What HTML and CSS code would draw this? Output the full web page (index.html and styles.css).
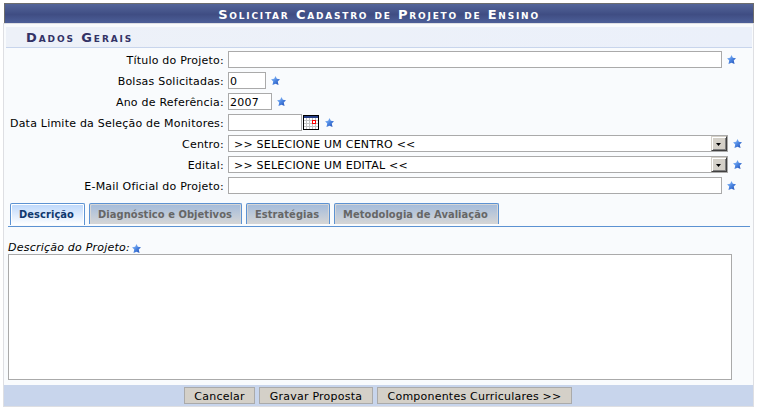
FILE: index.html
```html
<!DOCTYPE html>
<html lang="pt-BR">
<head>
<meta charset="utf-8">
<title>Solicitar Cadastro de Projeto de Ensino</title>
<link rel="stylesheet" href="styles.css">
</head>
<body>
<svg class="defs" width="0" height="0">
  <defs>
    <linearGradient id="g" x1="0" y1="0" x2="1" y2="1"><stop offset="0" stop-color="#a5d0ff"/><stop offset=".5" stop-color="#4c86e2"/><stop offset="1" stop-color="#1d49b0"/></linearGradient>
    <symbol id="star" viewBox="0 0 8 8"><path fill="url(#g)" d="M4 0l1.200 2.500 2.800.3-2 2 .7 3.200L4 6.900 1.300 8 2 4.800 0 2.800l2.800-.3z"/></symbol>
  </defs>
</svg>
<form class="panel">
  <h1 class="title">Solicitar Cadastro de Projeto de Ensino</h1>
  <div class="body">
    <h2 class="section">Dados Gerais</h2>
    <div class="row"><span class="label">Título do Projeto:</span><span class="field wide"></span><svg class="star"><use href="#star"/></svg></div>
    <div class="row"><span class="label">Bolsas Solicitadas:</span><span class="field w38">0</span><svg class="star"><use href="#star"/></svg></div>
    <div class="row"><span class="label">Ano de Referência:</span><span class="field w44">2007</span><svg class="star"><use href="#star"/></svg></div>
    <div class="row"><span class="label">Data Limite da Seleção de Monitores:</span><span class="field w74"></span>
      <svg class="cal" viewBox="0 0 16 15" shape-rendering="crispEdges"><path fill="#000" d="M0 0h16v15H0z"/><path fill="#fff" d="M1 3h14v11H1z"/><path fill="#263f87" d="M1 1h14v2H1z"/><path stroke="#c4c4c4" d="M3.500 3v11M6.500 3v11M9.500 3v11M12.500 3v11M1 5.500h14M1 8.500h14M1 11.500h14"/><path fill="#fff" stroke="#f00" d="M9.500 5.500h3v3h-3z"/></svg>
      <svg class="star"><use href="#star"/></svg></div>
    <div class="row"><span class="label">Centro:</span><span class="field select">&gt;&gt; SELECIONE UM CENTRO &lt;&lt;<i class="arrow"></i></span><svg class="star"><use href="#star"/></svg></div>
    <div class="row"><span class="label">Edital:</span><span class="field select">&gt;&gt; SELECIONE UM EDITAL &lt;&lt;<i class="arrow"></i></span><svg class="star"><use href="#star"/></svg></div>
    <div class="row"><span class="label">E-Mail Oficial do Projeto:</span><span class="field wide"></span><svg class="star"><use href="#star"/></svg></div>
    <div class="tabs">
      <span class="tab active t1">Descrição</span>
      <span class="tab t2">Diagnóstico e Objetivos</span>
      <span class="tab t3">Estratégias</span>
      <span class="tab t4">Metodologia de Avaliação</span>
    </div>
    <div class="desc"><em>Descrição do Projeto:</em><svg class="star"><use href="#star"/></svg></div>
    <div class="area"></div>
  </div>
  <div class="footer">
    <span class="btn b1">Cancelar</span><span class="btn b2">Gravar Proposta</span><span class="btn b3">Componentes Curriculares &gt;&gt;</span>
  </div>
</form>
</body>
</html>
```

FILE: styles.css
```css
* { box-sizing: border-box; }
body { margin: 0; background: #fff; color: #000; font: 11px/15px Verdana, "DejaVu Sans", sans-serif; letter-spacing: .22px; white-space: nowrap; }
.defs { display: block; }
.panel { width: 751px; margin: 3px 0 0 3px; }
.title { height: 20px; margin: 0 0 0 1px; border: solid #6d6d6d; border-width: 1px 1px 0 1px; background: linear-gradient(#54659a, #3f4d83 55%, #4d5f98); color: #fff; text-align: center; font: bold 13px/22px Verdana, "DejaVu Sans", sans-serif; font-variant: small-caps; letter-spacing: 1.780px; }
.body { height: 362px; border: 1px solid #dedfe3; border-bottom: 0; background: #f9fbfd; padding: 3px 1px 0 2px; }
.section { height: 21px; margin: 0 0 3px; padding-left: 20px; background: linear-gradient(90deg, #edf1f8, #ebf0fa); border-bottom: 1px solid #c8d5ec; color: #333366; font: bold 13px/22px Verdana, "DejaVu Sans", sans-serif; font-variant: small-caps; letter-spacing: 1.900px; }
.row { display: flex; height: 17px; margin-bottom: 4px; }
.label { width: 218px; margin-right: 4px; text-align: right; line-height: 19px; }
.field { display: flex; height: 17px; padding-left: 1px; border: 1px solid #aaa; background: #fff; line-height: 17px; }
.wide { width: 494px; }
.w38 { width: 38px; }
.w44 { width: 44px; }
.w74 { width: 74px; }
.select { width: 500px; padding-left: 5px; justify-content: space-between; }
.arrow { width: 16px; height: 15px; background: #d4d0c8; border: 1px solid; border-color: #d4d0c8 #404040 #404040 #d4d0c8; box-shadow: inset 1px 1px #fff, inset -1px -1px #808080; padding: 6px 0 0 4px; }
.arrow::before { content: ""; display: block; width: 5px; height: 3px; background: #000; clip-path: polygon(0 0, 100% 0, 50% 100%); }
.star { width: 9px; height: 9px; margin: 4px 0 0 5px; }
.cal { width: 16px; height: 15px; margin: 1px 1px 0; }
.tabs { display: flex; gap: 4px; height: 24px; margin: 9px 2px 0 2px; padding-left: 2px; border-bottom: 1px solid #5c92d2; }
.tab { height: 21px; padding-left: 8px; border: 1px solid #5c92d2; border-bottom: 0; border-radius: 2px 2px 0 0; background: linear-gradient(#a3bbdb, #d6d6d6); box-shadow: inset 1px 1px #d6d6d6, inset -1px 0 #d6d6d6; color: #666; font-family: "DejaVu Sans Condensed", "DejaVu Sans", sans-serif; font-stretch: semi-condensed; font-weight: bold; letter-spacing: .07px; line-height: 21px; }
.active { height: 22px; background: linear-gradient(#bcd7fb, #fff); box-shadow: inset 1px 1px #fff, inset -1px 0 #fff; color: #10386e; }
.t1 { width: 75px; } .t2 { width: 153px; } .t3 { width: 84px; } .t4 { width: 165px; }
.desc { display: flex; height: 27px; padding: 13px 0 0 2px; }
.desc .star { margin: 4px 0 0 2px; }
.area { width: 724px; height: 126px; margin-left: 2px; border: 1px solid #aaa; background: #fff; }
.footer { display: flex; gap: 4px; height: 22px; padding: 2px 0 0 180px; border: 1px solid #dedfe3; border-top: 0; background: #c8d5ec; }
.btn { height: 17px; border: 1px solid #aaa; background: #d4d0c8; text-align: center; line-height: 17px; }
.b1 { width: 71px; } .b2 { width: 114px; } .b3 { width: 195px; }
```
